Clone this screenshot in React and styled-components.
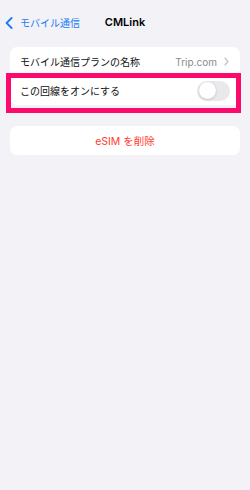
import React from 'react'
import styled, { createGlobalStyle } from 'styled-components'

const GlobalStyle = createGlobalStyle`
  html, body {
    margin: 0;
    padding: 0;
    background: #f2f2f7;
  }
  body {
    font-family: Inter, "Noto Sans CJK JP", sans-serif;
    -webkit-font-smoothing: antialiased;
  }
`

const Screen = styled.div`
  width: 250px;
  min-height: 490px;
  background: #f2f2f7;
`

const NavBar = styled.header`
  position: relative;
  height: 44px;
  display: flex;
  align-items: center;
  justify-content: center;
`

const BackButton = styled.a`
  position: absolute;
  left: 5px;
  top: 0;
  height: 44px;
  display: flex;
  align-items: center;
  gap: 7px;
  color: #1a7cf5;
  font-size: 10px;
  text-decoration: none;

  svg {
    margin-top: 1px;
  }
`

const Title = styled.h1`
  margin: 0;
  font-size: 11px;
  font-weight: 600;
  color: #000;
`

const Content = styled.main`
  padding: 3px 10px 0;
  display: flex;
  flex-direction: column;
  gap: 21px;
`

const Card = styled.section`
  background: #fff;
  border-radius: 7px;
`

const Row = styled.div`
  position: relative;
  height: 29px;
  padding: 0 10px;
  display: flex;
  align-items: center;
  justify-content: ${(p) => (p.$center ? 'center' : 'space-between')};
  font-size: 10px;
  color: #111;

  & + & {
    box-shadow: inset 10px 0.5px 0 -10px #c6c6c8;
  }
`

const Highlight = styled.div`
  position: absolute;
  top: -3px;
  left: -4px;
  right: -1px;
  bottom: -8px;
  border: 5px solid #fc0a6c;
  pointer-events: none;
`

const Detail = styled.span`
  display: flex;
  align-items: center;
  gap: 7px;
  color: #8a8a8e;
  margin-right: 1px;
`

const Switch = styled.span`
  position: relative;
  width: 33px;
  height: 20px;
  border-radius: 10px;
  background: #e9e9eb;

  &::after {
    content: '';
    position: absolute;
    top: 1.5px;
    left: 1.5px;
    width: 17px;
    height: 17px;
    border-radius: 50%;
    background: #fff;
    box-shadow: 0 1px 3px rgba(0, 0, 0, 0.15), 0 0 0 0.5px rgba(0, 0, 0, 0.04);
  }
`

const DangerText = styled.span`
  color: #ff3b30;
  font-size: 10.5px;
`

const App = () => (
  <Screen>
    <GlobalStyle />
    <NavBar>
      <BackButton href="#">
        <svg width="8" height="12" viewBox="0 0 8 12">
          <path
            d="M6.6 1 L1.6 6 L6.6 11"
            fill="none"
            stroke="#1a7cf5"
            strokeWidth="1.8"
            strokeLinecap="round"
            strokeLinejoin="round"
          />
        </svg>
        モバイル通信
      </BackButton>
      <Title>CMLink</Title>
    </NavBar>
    <Content>
      <Card>
        <Row>
          モバイル通信プランの名称
          <Detail>
            Trip.com
            <svg width="5" height="9" viewBox="0 0 5 9">
              <path
                d="M1 1 L4 4.5 L1 8"
                fill="none"
                stroke="#c4c4c7"
                strokeWidth="1.2"
                strokeLinecap="round"
                strokeLinejoin="round"
              />
            </svg>
          </Detail>
        </Row>
        <Row>
          この回線をオンにする
          <Switch />
          <Highlight />
        </Row>
      </Card>
      <Card>
        <Row $center>
          <DangerText>eSIM を削除</DangerText>
        </Row>
      </Card>
    </Content>
  </Screen>
)

export default App
